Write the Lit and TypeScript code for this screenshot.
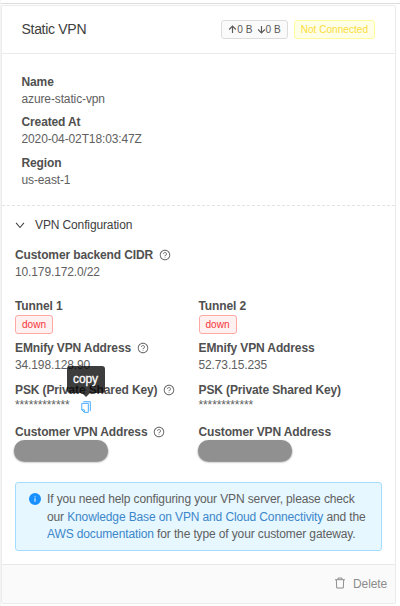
import { LitElement, html, css, svg, nothing } from "lit";
import { customElement, property } from "lit/decorators.js";

const icons: Record<string, unknown> = {
  help: svg`<path d="M512 64C264.600 64 64 264.600 64 512s200.600 448 448 448 448-200.600 448-448S759.400 64 512 64zm0 820c-205.400 0-372-166.600-372-372s166.600-372 372-372 372 166.600 372 372-166.600 372-372 372z"/><path d="M623.600 316.700C593.600 290.400 554 276 512 276s-81.600 14.500-111.600 40.700C369.200 344 352 380.700 352 420v7.600c0 4.400 3.600 8 8 8h48c4.400 0 8-3.600 8-8V420c0-44.100 43.100-80 96-80s96 35.900 96 80c0 31.100-22 59.600-56.100 72.700-21.200 8.100-39.200 22.300-52.100 40.900-13.100 19-19.900 41.800-19.900 64.900V620c0 4.400 3.600 8 8 8h48c4.400 0 8-3.600 8-8v-22.700a48.300 48.300 0 0 1 30.900-44.800c59-22.700 97.100-74.700 97.100-132.500.1-39.300-17.100-76-48.300-103.300zM472 732a40 40 0 1 0 80 0 40 40 0 1 0-80 0z"/>`,
  info: svg`<path fill-rule="evenodd" d="M512 0a512 512 0 1 0 0 1024A512 512 0 0 0 512 0zm46 728c0 4.400-3.600 8-8 8h-76c-4.400 0-8-3.600-8-8V448c0-4.400 3.600-8 8-8h76c4.400 0 8 3.600 8 8v280zM512 384a56 56 0 1 1 0-112 56 56 0 0 1 0 112z"/>`,
  up: svg`<path d="M512 920V130M130 510L512 130l382 380" fill="none" stroke="currentColor" stroke-width="130"/>`,
  down: svg`<path d="M512 104v790M130 514l382 380 382-380" fill="none" stroke="currentColor" stroke-width="130"/>`,
  chevron: svg`<path d="M110 290L512 770 914 290" fill="none" stroke="currentColor" stroke-width="110"/>`,
  copy: svg`<path d="M290 60H880V850M150 200H710V970H370L150 750ZM150 750H370V970" fill="none" stroke="currentColor" stroke-width="80"/>`,
  trash: svg`<path d="M90 230H934M340 220V90H684V220M200 250L230 940H794L824 250" fill="none" stroke="currentColor" stroke-width="84"/>`,
};

@customElement("ui-icon")
class UiIcon extends LitElement {
  @property() name = "";
  static styles = css`
    :host { display: inline-flex; width: 12px; height: 12px; flex: none; }
    svg { width: 100%; height: 100%; fill: currentColor; }
  `;
  render() {
    return html`<svg viewBox="0 0 1024 1024">${icons[this.name]}</svg>`;
  }
}

@customElement("app-root")
class AppRoot extends LitElement {
  static styles = css`
    :host {
      display: block; box-sizing: border-box; height: 606px; padding: 5px 4px 2px 1px;
      background: linear-gradient(#fff 3px, #dcdcdc 3px, #dcdcdc 4px, #fff 4px);
      font: 12px/17px "Liberation Sans", Arial, sans-serif; letter-spacing: -.125px; color: #606060;
      border-left: 1px solid #f4f4f4; overflow: hidden; white-space: nowrap;
    }
    * { box-sizing: border-box; }
    .card { height: 599px; border: 1px solid #ebebeb; border-radius: 2px; display: flex; flex-direction: column; background: #fff; margin-left: -1px; }
    .header { height: 48px; border-bottom: 1px solid #ebebeb; display: flex; align-items: center; padding: 0 20px 0 19.500px; gap: 6px; }
    .title { font-size: 14px; letter-spacing: -.3px; color: #404040; flex: 1; }
    .tag { height: 19px; font-size: 10.100px; letter-spacing: 0; line-height: 17px; border: 1px solid #dcdcdc; border-radius: 3px; background: #fafafa; padding: 0 6px; display: inline-flex; align-items: center; color: #595959; }
    .tag ui-icon { width: 9px; height: 9px; }
    .tag .next { margin-left: 4px; }
    .warn { color: #fbdc3c; background: #feffe6; border-color: #fffb9c; }
    .error { color: #f5343c; background: #fff1f0; border-color: #ffa8a3; }
    .summary { height: 152px; padding: 19.600px 19.500px 0; border-bottom: 1px dashed #e3e3e3; }
    .field { height: 42px; }
    .summary .field { height: 40.900px; }
    .label { font-weight: bold; color: #505050; display: flex; align-items: center; height: 17px; }
    .label ui-icon { margin: 0 0 2px 6px; color: #666; }
    .toggle { display: flex; align-items: center; height: 37px; padding: 2px 0 0 13px; color: #404040; }
    .toggle ui-icon { width: 10px; height: 10px; margin: 0 10px 1px 0; }
    .config { flex: 1; padding: 4px 13px 0; }
    .cidr { height: 51px; }
    .tunnels { display: grid; grid-template-columns: 183.500px 183.500px; }
    .state { height: 42px; }
    .state .tag { display: flex; width: 38px; }
    .secret { display: flex; align-items: center; height: 17px; margin-top: -2px; }
    .copy { margin: 2px 0 0 10px; color: #40a9ff; display: flex; position: relative; }
    .tip { position: absolute; left: 50%; bottom: 20px; transform: translateX(-50%); width: 38px; height: 27px; line-height: 26px; text-align: center; color: #fff; -webkit-text-stroke: .3px #fff; background: rgba(0, 0, 0, .76); border-radius: 3px; }
    .tip::after { content: ""; position: absolute; left: 15px; top: 27px; border: 4px solid transparent; border-top-color: rgba(0, 0, 0, .76); border-bottom: 0; }
    .mask { width: 94px; height: 21px; margin: -1px 0 0 -1px; border-radius: 11px; background: #909090; box-shadow: 0 1px 2px rgba(0, 0, 0, .55); }
    .alert { height: 69px; margin: 0 13px 13px; border: 1px solid #a3dcff; border-radius: 3px; background: #e6f7ff; padding: 8px 0 0 13px; display: flex; line-height: 17.500px; }
    .alert ui-icon { color: #1890ff; margin: 2px 6px 0 0; }
    a { color: #3c86ca; text-decoration: none; }
    .footer { height: 39px; border-top: 1px solid #e8e8e8; background: #fafafa; display: flex; align-items: center; justify-content: flex-end; padding: 0 8px 0 0; color: #8c8c8c; }
    .footer ui-icon { margin: 0 7px 2px 0; }
  `;

  private label(text: string, help = false) {
    return html`<div class="label">${text}${help ? html`<ui-icon name="help"></ui-icon>` : nothing}</div>`;
  }

  private field(label: string, value: string) {
    return html`<div class="field">${this.label(label)}<div>${value}</div></div>`;
  }

  private tunnel(n: number, address: string, help: boolean) {
    return html`<div>
      <div class="state">${this.label(`Tunnel ${n}`)}<span class="tag error">down</span></div>
      <div class="field">${this.label("EMnify VPN Address", help)}<div>${address}</div></div>
      <div class="state">${this.label("PSK (Private Shared Key)", help)}
        <div class="secret"><span class="stars">************</span>${help
          ? html`<span class="copy"><ui-icon name="copy"></ui-icon><span class="tip">copy</span></span>` : nothing}</div>
      </div>
      ${this.label("Customer VPN Address", help)}<div class="mask"></div>
    </div>`;
  }

  render() {
    return html`<div class="card">
      <div class="header">
        <span class="title">Static VPN</span>
        <span class="tag"><ui-icon name="up"></ui-icon>0 B<ui-icon class="next" name="down"></ui-icon>0 B</span>
        <span class="tag warn">Not Connected</span>
      </div>
      <div class="summary">
        ${this.field("Name", "azure-static-vpn")}
        ${this.field("Created At", "2020-04-02T18:03:47Z")}
        ${this.field("Region", "us-east-1")}
      </div>
      <div class="toggle"><ui-icon name="chevron"></ui-icon>VPN Configuration</div>
      <div class="config">
        <div class="cidr">${this.label("Customer backend CIDR", true)}<div>10.179.172.0/22</div></div>
        <div class="tunnels">${this.tunnel(1, "34.198.128.90", true)}${this.tunnel(2, "52.73.15.235", false)}</div>
      </div>
      <div class="alert"><ui-icon name="info"></ui-icon><div>
        If you need help configuring your VPN server, please check<br>
        our <a>Knowledge Base on VPN and Cloud Connectivity</a> and the<br>
        <a>AWS documentation</a> for the type of your customer gateway.
      </div></div>
      <div class="footer"><ui-icon name="trash"></ui-icon>Delete</div>
    </div>`;
  }
}
